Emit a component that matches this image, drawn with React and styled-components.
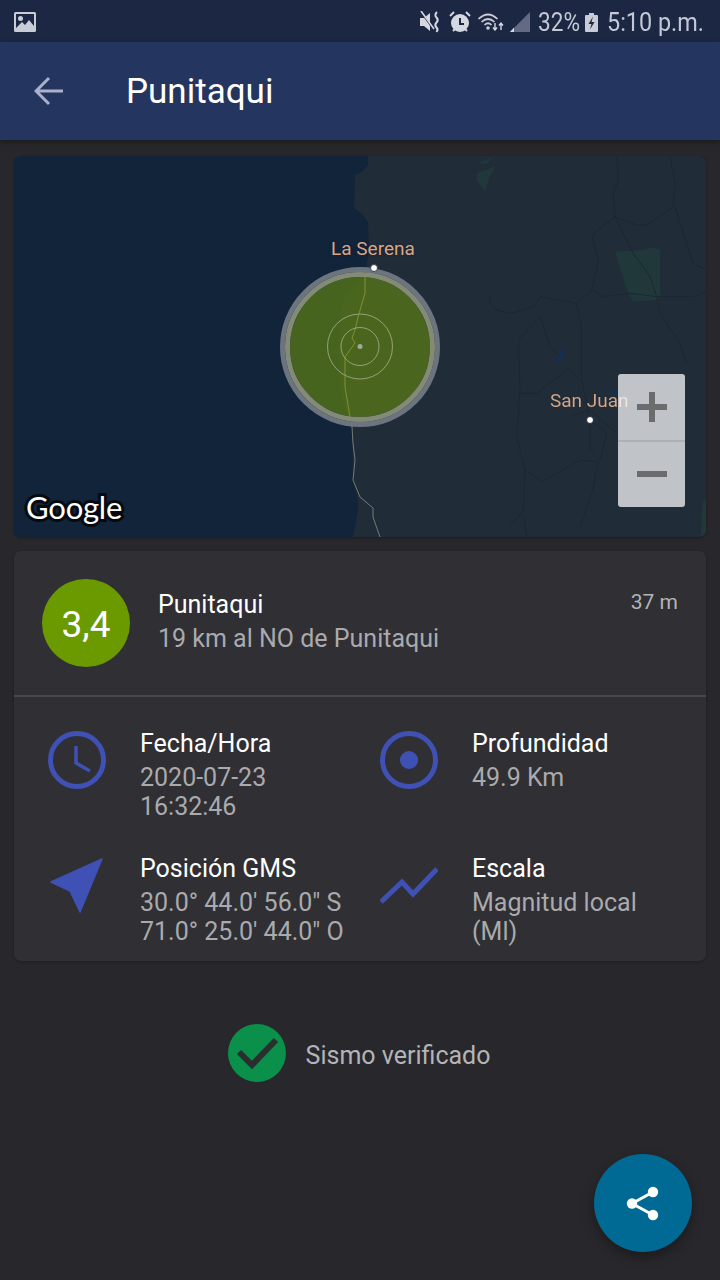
import React from "react";
import styled, { createGlobalStyle } from "styled-components";

const Global = createGlobalStyle`
  html, body { margin: 0; padding: 0; background: #28282c; }
  body { font-family: Roboto, "Liberation Sans", sans-serif; }
  * { box-sizing: border-box; }
`;

const Screen = styled.div`
  position: relative;
  width: 720px;
  height: 1280px;
  overflow: hidden;
  background: #28282c;
  display: flex;
  flex-direction: column;
`;

const StatusBar = styled.div`
  height: 42px;
  flex: none;
  background: #1c2744;
  display: flex;
  align-items: center;
  justify-content: space-between;
  padding: 2px 17px 0 14px;
  color: #c3c8d4;
`;
const StatusRight = styled.div`
  display: flex;
  align-items: center;
`;
const StatusIcon = styled.svg`
  display: block;
  flex: none;
  margin-left: ${(p) => p.$ml || 0}px;
`;
const StatusText = styled.span`
  display: block;
  width: ${(p) => p.$w}px;
  font-size: 26px;
  line-height: 40px;
  margin-left: ${(p) => p.$ml || 0}px;
  white-space: nowrap;
  transform: scaleX(${(p) => p.$sx});
  transform-origin: left center;
`;

const AppBar = styled.header`
  height: 98px;
  flex: none;
  background: #243560;
  display: flex;
  align-items: center;
  padding-left: 34px;
  box-shadow: 0 2px 6px rgba(0, 0, 0, 0.35);
  z-index: 1;
`;
const BackIcon = styled.svg`
  display: block;
  flex: none;
  margin-right: 63px;
`;
const Title = styled.h1`
  margin: 2px 0 0 -1px;
  font-size: 35px;
  font-weight: 400;
  color: #fff;
  line-height: 40px;
`;

const Content = styled.main`
  flex: 1;
  padding: 16px 14px 0;
  display: flex;
  flex-direction: column;
  gap: 14px;
`;

const MapCard = styled.section`
  position: relative;
  height: 381px;
  border-radius: 7px;
  overflow: hidden;
  background: #11243a;
  box-shadow: 0 1px 3px rgba(0, 0, 0, 0.3);
`;
const MapArt = styled.svg`
  display: block;
  width: 692px;
  height: 381px;
`;
const MapLabel = styled.span`
  position: absolute;
  left: ${(p) => p.$x}px;
  top: ${(p) => p.$y}px;
  font-size: 19px;
  line-height: 24px;
  color: #d9a585;
  white-space: nowrap;
  text-shadow: 0 0 3px rgba(20, 30, 45, 0.9);
`;
/* The San Juan label runs under the translucent zoom control, where it reads almost white. */
const MapLabelUnderControl = styled(MapLabel)`
  z-index: 1;
  color: transparent;
  text-shadow: none;
  background: linear-gradient(90deg, #d9a585 68px, #efe6df 68px);
  -webkit-background-clip: text;
  background-clip: text;
`;
const GoogleMark = styled.span`
  position: absolute;
  left: 12px;
  top: 331px;
  font-family: Lato, "Open Sans", sans-serif;
  font-size: 31px;
  line-height: 40px;
  font-weight: 400;
  letter-spacing: -0.2px;
  color: #fff;
  -webkit-text-stroke: 6px #060a10;
  paint-order: stroke fill;
`;
const ZoomControl = styled.div`
  position: absolute;
  left: 604px;
  top: 218px;
  width: 67px;
  height: 133px;
  border-radius: 3px;
  background: rgba(206, 208, 213, 0.92);
  display: flex;
  flex-direction: column;
`;
const ZoomButton = styled.div`
  flex: 1;
  display: flex;
  align-items: center;
  justify-content: center;
  border-top: ${(p) => (p.$divided ? "2px solid #aeb0b6" : "none")};
`;

const InfoCard = styled.section`
  height: 410px;
  border-radius: 7px;
  background: #2f2f34;
  box-shadow: 0 1px 3px rgba(0, 0, 0, 0.25);
`;
const Head = styled.div`
  height: 146px;
  padding: 28px 28px 0;
  display: flex;
  align-items: flex-start;
  border-bottom: 2px solid #47474c;
`;
const Magnitude = styled.div`
  width: 88px;
  height: 88px;
  flex: none;
  border-radius: 50%;
  background: #6b9a00;
  color: #fff;
  font-size: 37px;
  padding-top: 2px;
  display: flex;
  align-items: center;
  justify-content: center;
  margin-right: 28px;
`;
const HeadText = styled.div`
  flex: 1;
  padding-top: 9px;
`;
const Name = styled.div`
  font-size: 25px;
  line-height: 34px;
  color: #fff;
`;
const Sub = styled.div`
  font-size: 25px;
  line-height: 34px;
  color: #aaaaad;
`;
const Ago = styled.div`
  font-size: 21px;
  line-height: 28px;
  color: #b4b4b6;
  padding-top: 9px;
`;

const Grid = styled.div`
  display: grid;
  grid-template-columns: 332px 294px;
  row-gap: 33px;
  padding: 32px 0 0 34px;
`;
const Item = styled.div`
  display: flex;
  align-items: flex-start;
  gap: 34px;
`;
const ItemIcon = styled.svg`
  display: block;
  flex: none;
  margin-top: 2px;
`;
const ItemTitle = styled.div`
  font-size: 25px;
  line-height: 29px;
  color: #fff;
  margin-bottom: 5px;
`;
const ItemLine = styled.div`
  font-size: 25px;
  line-height: 29px;
  color: #aaaaad;
  white-space: nowrap;
`;

const Verified = styled.div`
  display: flex;
  align-items: center;
  justify-content: center;
  gap: 20px;
  margin-top: 49px;
  padding-right: 2px;
  color: #b4b4b7;
  font-size: 25px;
`;
const VerifiedText = styled.span`
  padding-top: 4px;
`;

const Fab = styled.button`
  position: absolute;
  left: 594px;
  top: 1154px;
  width: 98px;
  height: 98px;
  border: 0;
  padding: 0;
  border-radius: 50%;
  background: #006994;
  display: flex;
  align-items: center;
  justify-content: center;
  box-shadow: 0 5px 12px rgba(0, 0, 0, 0.35);
`;

const line = (pts, ox = 360, oy = 150) =>
  pts.map(([x, y]) => `${ox + x / 3},${oy + y / 3}`).join(" ");

const terrain = [
  [[770, 20], [775, 90], [760, 130], [765, 200], [830, 225], [860, 225], [940, 170], [945, 100], [930, 20]],
  [[765, 200], [695, 255], [715, 330], [695, 420], [650, 460], [540, 440], [525, 470], [450, 490], [410, 480], [390, 460], [390, 435]],
  [[695, 420], [730, 440], [810, 430], [890, 440], [1000, 440], [1040, 425]],
  [[765, 200], [820, 310], [870, 380], [890, 440], [900, 490], [960, 580], [980, 640]],
  [[650, 460], [665, 540], [665, 690], [690, 810]],
  [[540, 500], [475, 570], [480, 720], [470, 860], [495, 960], [545, 995], [660, 930], [715, 935], [700, 1010], [660, 1130]],
  [[480, 730], [530, 730], [570, 700], [625, 655], [660, 690]],
  [[540, 500], [570, 590], [600, 620]],
  [[690, 810], [740, 850], [720, 930], [690, 900], [690, 820]],
  [[495, 960], [490, 1080], [450, 1130]],
  [[490, 1100], [500, 1160]],
  [[630, 800], [690, 780], [770, 850]],
  [[945, 170], [1000, 340], [1040, 360]],
];

const MapDrawing = () => (
  <MapArt viewBox="14 156 692 381">
    <rect x="14" y="156" width="692" height="381" fill="#11243a" />
    <polygon
      fill="#212c39"
      points="368,156 368,165 362,172 355,175 354,208 362,214 368,222 369,250 366,270 358,283 346,295 340,310 339,350 340,390 346,412 352,427 353,480 358,500 358,510 353,537 706,537 706,156"
    />
    <polygon fill="#21383a" points={line([[765, 305], [845, 300], [875, 293], [900, 298], [900, 440], [885, 450], [820, 455], [805, 430], [785, 370]])} />
    <polygon fill="#21383a" points={line([[350, 70], [405, 50], [385, 90], [375, 125], [350, 90]])} />
    <polygon fill="#21383a" points={line([[355, 38], [400, 20], [380, 42]])} />
    <polygon fill="#21383a" points={line([[1028, 1055], [1038, 1050], [1038, 1160], [1022, 1160]])} />
    <polygon fill="#13304f" points={line([[603, 590], [616, 630], [590, 633]])} />
    <polygon fill="#13304f" points={line([[745, 733], [765, 713], [772, 733]])} />
    <g fill="none" stroke="#1c2733" strokeWidth="1">
      {terrain.map((pts, i) => (
        <polyline key={i} points={line(pts)} />
      ))}
    </g>
    <circle cx="360" cy="347" r="70" fill="rgba(88,122,22,0.75)" />
    <circle cx="360" cy="347" r="77.5" fill="none" stroke="#6c7480" strokeWidth="5" />
    <circle cx="360" cy="347" r="72.5" fill="none" stroke="#838b76" strokeWidth="5" />
    <polyline
      fill="none"
      stroke="#7f9030"
      strokeWidth="1"
      points="365,277 365,293 358,317 355,330 352,338 355,343 345,357 345,387 350,417"
    />
    <polyline
      fill="none"
      stroke="#777a72"
      strokeWidth="1"
      points="351,420 352,427 353,443 355,460 353,480 360,497 373,508 373,517 380,537"
    />
    <polyline fill="none" stroke="#8b907f" strokeWidth="1" points="365,277 370,272" />
    <g fill="none" stroke="#aab08f" strokeWidth="0.8">
      <circle cx="360" cy="346.5" r="32.5" />
      <circle cx="360" cy="346.5" r="19" />
    </g>
    <circle cx="360" cy="346.5" r="2.5" fill="#a3a99a" />
    <circle cx="374" cy="268" r="3.5" fill="#fff" stroke="#3a4250" strokeWidth="1" />
    <circle cx="590" cy="420" r="3.5" fill="#fff" stroke="#1b2431" strokeWidth="1" />
  </MapArt>
);

export default function App() {
  return (
    <Screen>
      <Global />
      <StatusBar>
        <StatusIcon width="22" height="20" viewBox="0 0 22 20">
          <rect width="22" height="20" rx="1.5" fill="#c8ccd6" />
          <rect x="2" y="2" width="18" height="15" fill="#1c2744" />
          <circle cx="6.5" cy="6.5" r="2.5" fill="#c8ccd6" />
          <path d="M2 16 L8 10 L11 13 L15 8 L20 14 V18 H2 Z" fill="#c8ccd6" />
        </StatusIcon>
        <StatusRight>
          <StatusIcon width="22" height="22" viewBox="0 0 22 22">
            <path d="M0 7 H4 L10 2 V20 L4 15 H0 Z" fill="#d5d8e0" />
            <path d="M1 1 L15 20" stroke="#1c2744" strokeWidth="2" />
            <path d="M1 0 L14 18" stroke="#d5d8e0" strokeWidth="1.6" />
            <path d="M17 1 Q14 4 16.5 6.5 Q19 9 16.5 11.5 Q14 14 16.5 16.5 Q18.5 18.5 16.5 21" fill="none" stroke="#d5d8e0" strokeWidth="2" />
          </StatusIcon>
          <StatusIcon $ml={7} width="22" height="22" viewBox="0 0 22 22">
            <circle cx="11" cy="12" r="9" fill="#d5d8e0" />
            <path d="M11 7 V13 H15" fill="none" stroke="#1c2744" strokeWidth="2" />
            <path d="M1 5 L5 1 M21 5 L17 1 M4 20 L6 18 M18 20 L16 18" stroke="#d5d8e0" strokeWidth="2" />
          </StatusIcon>
          <StatusIcon $ml={7} width="27" height="18" viewBox="0 0 27 18">
            <g fill="none" stroke="#c8ccd6" strokeWidth="1.7">
              <path d="M0.5 6 Q10 -3 19.5 6" />
              <path d="M3.5 9 Q10 3 16.5 9" />
              <path d="M6.5 12 Q10 8.5 13.5 12" />
            </g>
            <circle cx="10" cy="15" r="1.8" fill="#c8ccd6" />
            <path d="M17 10 V17 M15 14.5 L17 17 L19 14.5 M23 17 V10 M21 12.5 L23 10 L25 12.5" fill="none" stroke="#d5d8e0" strokeWidth="1.4" />
          </StatusIcon>
          <StatusIcon $ml={4} width="22" height="20" viewBox="0 0 22 20">
            <polygon points="21,0 21,20 1,20" fill="#626a84" />
            <polygon points="1,20 5,15.5 5,20" fill="#d5d8e0" />
          </StatusIcon>
          <StatusText $ml={7} $w={42} $sx={0.87}>32%</StatusText>
          <StatusIcon $ml={5} width="13" height="19" viewBox="0 0 13 19">
            <rect x="4" y="0" width="5" height="2" fill="#c8ccd6" />
            <rect x="0" y="2" width="13" height="17" rx="1" fill="#c8ccd6" />
            <path d="M8 3.5 L3.5 11 H6.5 L5 16.5 L9.5 9 H6.5 Z" fill="#1c2744" />
          </StatusIcon>
          <StatusText $ml={9} $w={96} $sx={0.9}>5:10 p.m.</StatusText>
        </StatusRight>
      </StatusBar>
      <AppBar>
        <BackIcon width="30" height="30" viewBox="0 0 30 30">
          <path d="M29 15 H3 M15 2 L2 15 L15 28" fill="none" stroke="#a9b2c8" strokeWidth="3" />
        </BackIcon>
        <Title>Punitaqui</Title>
      </AppBar>
      <Content>
        <MapCard>
          <MapDrawing />
          <MapLabel $x={317} $y={81}>La Serena</MapLabel>
          <MapLabelUnderControl $x={536} $y={233}>San Juan</MapLabelUnderControl>
          <GoogleMark>Google</GoogleMark>
          <ZoomControl>
            <ZoomButton>
              <svg width="30" height="30" viewBox="0 0 30 30">
                <path d="M0 15 H30 M15 0 V30" stroke="#6b6c6e" strokeWidth="6" />
              </svg>
            </ZoomButton>
            <ZoomButton $divided>
              <svg width="30" height="30" viewBox="0 0 30 30">
                <path d="M0 15 H30" stroke="#6b6c6e" strokeWidth="6" />
              </svg>
            </ZoomButton>
          </ZoomControl>
        </MapCard>
        <InfoCard>
          <Head>
            <Magnitude>3,4</Magnitude>
            <HeadText>
              <Name>Punitaqui</Name>
              <Sub>19 km al NO de Punitaqui</Sub>
            </HeadText>
            <Ago>37 m</Ago>
          </Head>
          <Grid>
            <Item>
              <ItemIcon width="58" height="58" viewBox="0 0 58 58">
                <circle cx="29" cy="29" r="26.5" fill="none" stroke="#3f51b5" strokeWidth="5" />
                <path d="M28 15 V32 L42 40" fill="none" stroke="#3f51b5" strokeWidth="3.5" />
              </ItemIcon>
              <div>
                <ItemTitle>Fecha/Hora</ItemTitle>
                <ItemLine>2020-07-23</ItemLine>
                <ItemLine>16:32:46</ItemLine>
              </div>
            </Item>
            <Item>
              <ItemIcon width="58" height="58" viewBox="0 0 58 58">
                <circle cx="29" cy="29" r="26.5" fill="none" stroke="#3f51b5" strokeWidth="5" />
                <circle cx="29" cy="29" r="9" fill="#3f51b5" />
              </ItemIcon>
              <div>
                <ItemTitle>Profundidad</ItemTitle>
                <ItemLine>49.9 Km</ItemLine>
              </div>
            </Item>
            <Item>
              <ItemIcon width="58" height="58" viewBox="0 0 58 58">
                <path d="M54 3 L3 26 L22 35 L32 56 Z" fill="#3f51b5" stroke="#3f51b5" strokeWidth="1.5" strokeLinejoin="round" />
              </ItemIcon>
              <div>
                <ItemTitle>Posición GMS</ItemTitle>
                <ItemLine>30.0° 44.0' 56.0" S</ItemLine>
                <ItemLine>71.0° 25.0' 44.0" O</ItemLine>
              </div>
            </Item>
            <Item>
              <ItemIcon width="58" height="58" viewBox="0 0 58 58">
                <path d="M1 46 L22 26 L33 38 L57 13" fill="none" stroke="#3f51b5" strokeWidth="5" />
              </ItemIcon>
              <div>
                <ItemTitle>Escala</ItemTitle>
                <ItemLine>Magnitud local</ItemLine>
                <ItemLine>(Ml)</ItemLine>
              </div>
            </Item>
          </Grid>
        </InfoCard>
        <Verified>
          <svg width="58" height="58" viewBox="0 0 58 58">
            <circle cx="29" cy="29" r="29" fill="#0b904c" />
            <path d="M11 28 L24 41 L48 16" fill="none" stroke="#2b2e2f" strokeWidth="6" />
          </svg>
          <VerifiedText>Sismo verificado</VerifiedText>
        </Verified>
      </Content>
      <Fab aria-label="Compartir">
        <svg width="36" height="36" viewBox="0 0 36 36">
          <path d="M28 7 L7 18.5 L28 30" fill="none" stroke="#fff" strokeWidth="3" />
          <circle cx="28" cy="7" r="5.2" fill="#fff" />
          <circle cx="7" cy="18.5" r="5.2" fill="#fff" />
          <circle cx="28" cy="30" r="5.2" fill="#fff" />
        </svg>
      </Fab>
    </Screen>
  );
}
